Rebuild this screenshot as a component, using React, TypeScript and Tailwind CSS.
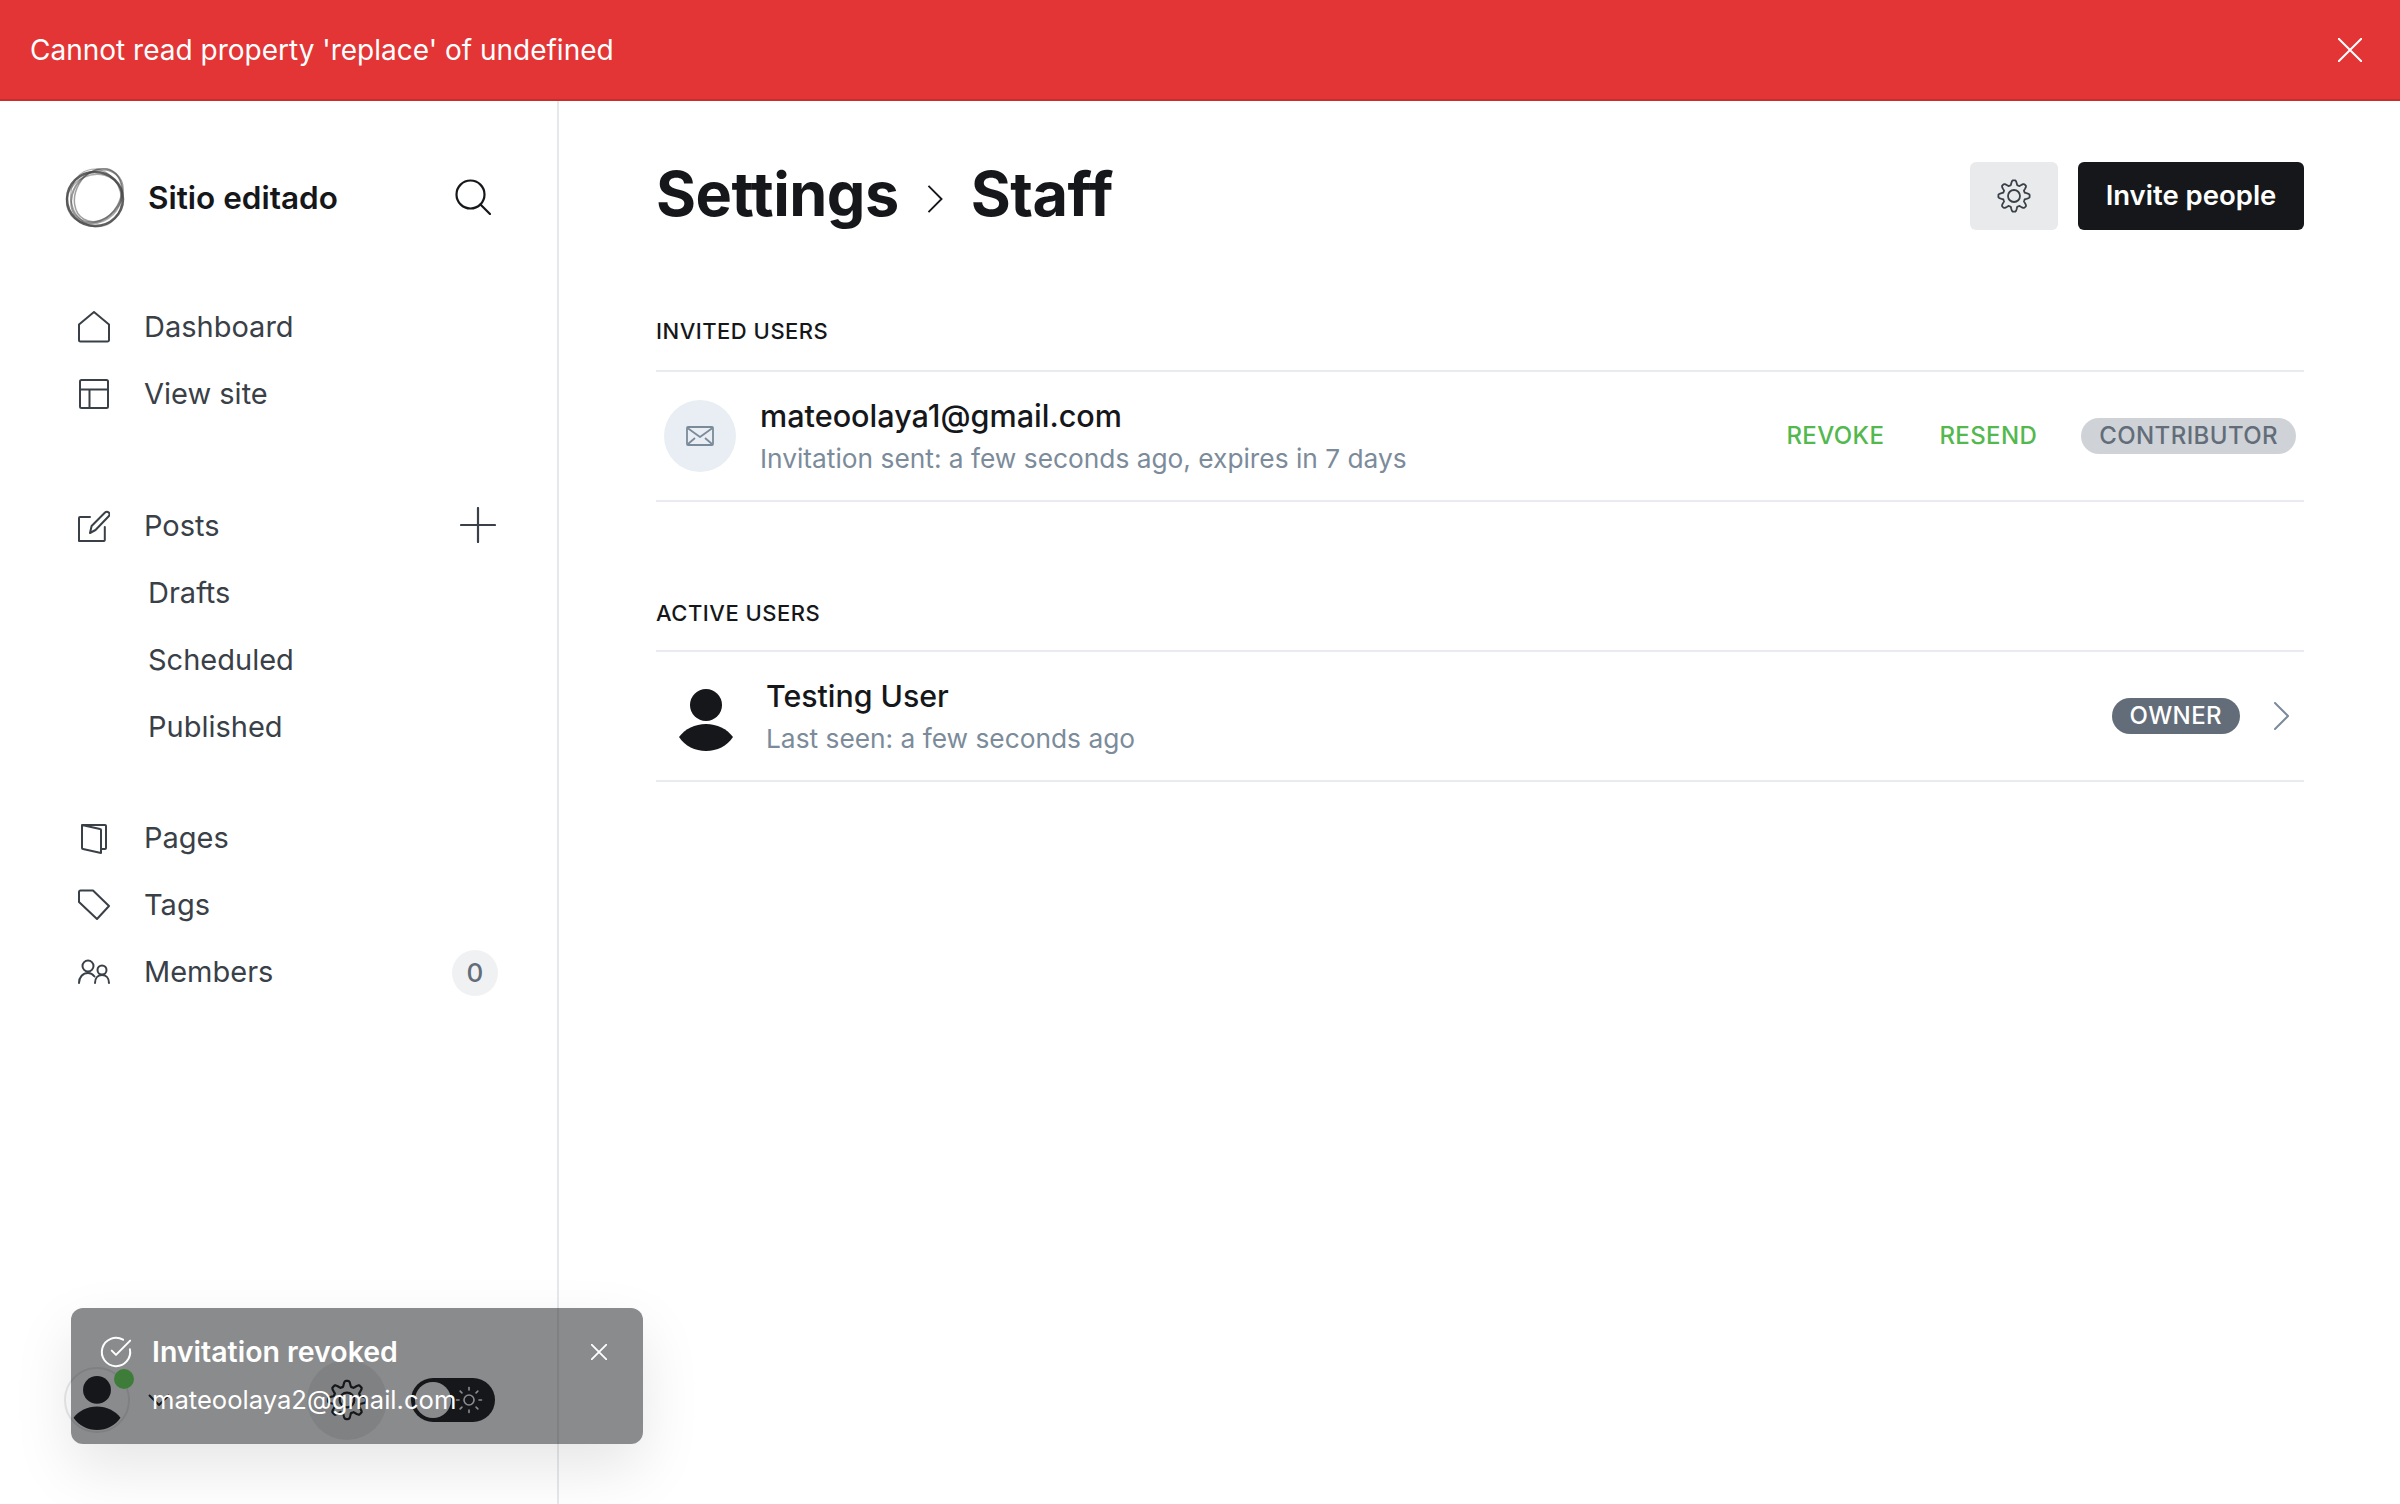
import React from "react";
import { CircleCheckBig, Sun } from "lucide-react";

const navIcon = "w-8 h-8 shrink-0 text-[#394047]";

// scalloped 8 tooth outline, the icon set has no gear with this shape
const gearOutline = Array.from({ length: 144 }, (_, i) => {
  const t = (i / 144) * Math.PI * 2;
  const wave = Math.max(-1, Math.min(1, Math.cos(8 * t) * 1.5));
  const r = 13.4 + 2.2 * wave;
  return `${(18 + r * Math.sin(t)).toFixed(2)},${(18 - r * Math.cos(t)).toFixed(2)}`;
}).join(" ");

function GearIcon({ className, stroke }: { className: string; stroke: string }) {
  return (
    <svg viewBox="0 0 36 36" className={className} fill="none" stroke={stroke} strokeWidth="1.800" strokeLinejoin="round">
      <polygon points={gearOutline} />
      <circle cx="18" cy="18" r="6" />
    </svg>
  );
}

function HomeIcon() {
  return (
    <svg viewBox="0 0 32 32" fill="none" stroke="currentColor" strokeWidth="2" strokeLinejoin="round" className={navIcon}>
      <path d="M1 13.5 16 1l15 12.5V29a1.5 1.5 0 0 1-1.5 1.5h-27A1.5 1.5 0 0 1 1 29z" />
    </svg>
  );
}

function LayoutIcon() {
  return (
    <svg viewBox="0 0 32 32" fill="none" stroke="currentColor" strokeWidth="2" strokeLinejoin="round" className={navIcon}>
      <rect x="2" y="2" width="28" height="28" rx="1.5" />
      <path d="M2 11.5h28M11.5 11.5V30" />
    </svg>
  );
}

function PostsIcon() {
  return (
    <svg viewBox="0 0 32 32" fill="none" stroke="currentColor" strokeWidth="2" strokeLinecap="round" strokeLinejoin="round" className={navIcon}>
      <path d="M12 7H2a1 1 0 0 0-1 1v23h25a1 1 0 0 0 .8-1V17" />
      <path d="m12 23 1.6-7L27 2.5a2.6 2.6 0 0 1 3.7 3.7L17.5 20z" />
    </svg>
  );
}

function PagesIcon() {
  return (
    <svg viewBox="0 0 32 32" fill="none" stroke="currentColor" strokeWidth="2" strokeLinejoin="round" className={navIcon}>
      <path d="M4 3h23a1 1 0 0 1 1 1v22a1 1 0 0 1-1 1h-4" />
      <path d="M4 3l18 4a1 1 0 0 1 1 1v23L5 27a1 1 0 0 1-1-1z" />
    </svg>
  );
}

function TagIcon() {
  return (
    <svg viewBox="0 0 32 32" fill="none" stroke="currentColor" strokeWidth="2" strokeLinejoin="round" className={navIcon}>
      <path d="M1 3a1.5 1.5 0 0 1 1.5-1.5H15L31 17 19 30 1 13z" />
    </svg>
  );
}

function MembersIcon() {
  return (
    <svg viewBox="0 0 32 32" fill="none" stroke="currentColor" strokeWidth="2" strokeLinecap="round" className={navIcon}>
      <circle cx="10" cy="10" r="5.5" />
      <path d="M1 27c0-6 4-10 9-10 3 0 5 1.500 6.500 3.500" />
      <circle cx="24" cy="14" r="4.500" />
      <path d="M17 27c0-5 3-8 7-8s7 3 7 8" />
    </svg>
  );
}

function PersonIcon({ className }: { className: string }) {
  return (
    <svg viewBox="0 0 54 62" className={className} fill="#15171a">
      <ellipse cx="27" cy="16" rx="16" ry="16" />
      <path d="M0 48C6 40 16 35 27 35s21 5 27 13C48 57 38 62 27 62S6 57 0 48z" />
    </svg>
  );
}

function SiteLogo() {
  return (
    <svg viewBox="0 0 62 60" className="w-[62px] h-[60px] shrink-0" fill="none" stroke="#444">
      <ellipse cx="30" cy="31" rx="28" ry="27" strokeWidth="2.500" strokeOpacity="0.85" />
      <ellipse cx="32" cy="28" rx="29" ry="23" strokeWidth="2" strokeOpacity="0.55" transform="rotate(-48 32 28)" />
      <ellipse cx="33" cy="27" rx="28" ry="22" strokeWidth="1.500" strokeOpacity="0.5" transform="rotate(-60 33 27)" />
      <ellipse cx="29" cy="31" rx="28" ry="24" strokeWidth="1.500" strokeOpacity="0.45" transform="rotate(-25 29 31)" />
      <ellipse cx="31" cy="30" rx="29" ry="25" strokeWidth="1.200" strokeOpacity="0.4" transform="rotate(75 31 30)" />
    </svg>
  );
}

function NavRow({ icon, label, right }: { icon: React.ReactNode; label: string; right?: React.ReactNode }) {
  return (
    <div className="flex items-center h-[67px] pl-[78px] pr-[59px] text-[29px] text-[#394047]">
      {icon}
      <span className="ml-[34px] flex-1">{label}</span>
      {right}
    </div>
  );
}

function SubRow({ label }: { label: string }) {
  return <div className="flex items-center h-[67px] pl-[148px] text-[29px] text-[#394047]">{label}</div>;
}

export default function App() {
  return (
    <div className="relative flex flex-col h-[1504px] w-[2400px] overflow-hidden bg-white font-[Inter,sans-serif]">
      {/* Error banner */}
      <div className="flex items-center justify-between h-[101px] shrink-0 pl-[30px] pr-[38px] bg-[#e33535] border-b-2 border-[#c62d2d] text-white text-[28px]">
        <span>Cannot read property 'replace' of undefined</span>
        <svg viewBox="0 0 24 24" className="w-6 h-6" fill="none" stroke="white" strokeWidth="2">
          <path d="M0 0l24 24M24 0L0 24" />
        </svg>
      </div>

      <div className="flex flex-1 min-h-0">
        {/* Sidebar */}
        <aside className="flex flex-col w-[559px] shrink-0 border-r-2 border-[#e6e9eb] pt-[67px] pb-[64px]">
          <div className="flex items-center h-[60px] pl-[65px] pr-[66px]">
            <SiteLogo />
            <span className="ml-[21px] flex-1 text-[31.500px] font-semibold text-[#15171a]">Sitio editado</span>
            <svg viewBox="0 0 36 36" className="w-9 h-9 mb-[2px]" fill="none" stroke="#15171a" strokeWidth="2.200" strokeLinecap="round">
              <circle cx="15.500" cy="15.500" r="14" />
              <path d="M25.500 25.500 35 35" />
            </svg>
          </div>

          <nav className="mt-[65px] flex flex-col gap-[65px]">
            <div>
              <NavRow icon={<HomeIcon />} label="Dashboard" />
              <NavRow icon={<LayoutIcon />} label="View site" />
            </div>
            <div className="flex flex-col gap-[44px]">
              <div>
                <NavRow
                  icon={<PostsIcon />}
                  label="Posts"
                  right={
                    <svg viewBox="0 0 36 36" className="w-9 h-9 mr-[2px] mb-[2px]" fill="none" stroke="#394047" strokeWidth="2.200" strokeLinecap="round">
                      <path d="M18 1v34M1 18h34" />
                    </svg>
                  }
                />
                <SubRow label="Drafts" />
                <SubRow label="Scheduled" />
                <SubRow label="Published" />
              </div>
              <div>
                <NavRow icon={<PagesIcon />} label="Pages" />
                <NavRow icon={<TagIcon />} label="Tags" />
                <NavRow
                  icon={<MembersIcon />}
                  label="Members"
                  right={
                    <span className="flex items-center justify-center w-[46px] h-[46px] mt-[2px] rounded-full bg-[#eff1f3] text-[26px] font-medium text-[#626d79]">
                      0
                    </span>
                  }
                />
              </div>
            </div>
          </nav>

          {/* User row, sits behind the toast */}
          <div className="mt-auto flex items-center pl-[64px]">
            <div className="relative flex items-end justify-center w-[66px] h-[66px] rounded-full border-2 border-[#e6e9eb]">
              <PersonIcon className="w-[48px] h-[54px] mb-[1px]" />
              <span className="absolute top-[0px] -right-[6px] w-5 h-5 rounded-full bg-[#67e158]" />
            </div>
            <svg viewBox="0 0 22 12" className="w-[22px] h-3 ml-[18px]" fill="none" stroke="#15171a" strokeWidth="2">
              <path d="M1 1l10 10L21 1" />
            </svg>
            <div className="flex items-center justify-center w-20 h-20 ml-[137px] rounded-full bg-[#e9ebed]">
              <GearIcon className="w-[44px] h-[44px]" stroke="#15171a" />
            </div>
            <div className="flex items-center justify-between w-[84px] h-11 ml-[24px] px-1 rounded-full bg-[#15171a]">
              <span className="w-9 h-9 rounded-full bg-white" />
              <Sun className="w-[30px] h-[30px] mr-[7px] text-white" strokeWidth={1.3} />
            </div>
          </div>
        </aside>

        {/* Main */}
        <main className="flex-1 pt-[61px] pl-[97px] pr-[96px]">
          <header className="flex items-center justify-between h-[68px]">
            <h1 className="flex items-center mb-[2px] text-[61.200px] font-bold tracking-[-0.5px] text-[#15171a]">
              Settings
              <svg viewBox="0 0 16 30" className="w-4 h-[28px] mx-[28px] mt-[8px]" fill="none" stroke="#15171a" strokeWidth="2">
                <path d="M1 1l14 14L1 29" />
              </svg>
              Staff
            </h1>
            <div className="flex items-center gap-5">
              <button className="flex items-center justify-center w-[88px] h-[68px] rounded-md bg-[#e9eaec]">
                <GearIcon className="w-9 h-9" stroke="#394047" />
              </button>
              <button className="w-[226px] h-[68px] rounded-md bg-[#15171a] text-white text-[27.500px] font-semibold">
                Invite people
              </button>
            </div>
          </header>

          <section className="mt-[84px]">
            <h2 className="h-[56px] text-[22px] font-medium leading-[34px] tracking-[0.5px] text-[#15171a]">INVITED USERS</h2>
            <div className="flex items-center h-[132px] px-2 border-y-2 border-[#e8ecf0]">
              <div className="flex items-center justify-center w-[72px] h-[72px] rounded-full bg-[#e8eef3]">
                <svg viewBox="0 0 28 20" className="w-7 h-5" fill="none" stroke="#7c8b9a" strokeWidth="1.800" strokeLinejoin="round">
                  <rect x="1" y="1" width="26" height="18" rx="1" />
                  <path d="M1.500 2 14 11 26.500 2M2 18l7-6M26 18l-7-6" />
                </svg>
              </div>
              <div className="ml-[24px] mt-[2px] flex-1">
                <div className="text-[30.600px] leading-[42px] font-medium text-[#15171a]">mateoolaya1@gmail.com</div>
                <div className="mt-[1px] text-[26.300px] leading-[42px] text-[#7c8b9a]">Invitation sent: a few seconds ago, expires in 7 days</div>
              </div>
              <div className="flex items-center text-[24px] font-medium text-[#53b84e] tracking-[0.4px]">
                <span>REVOKE</span>
                <span className="ml-[55px]">RESEND</span>
                <span className="ml-[44px] px-[18px] h-9 leading-9 rounded-full bg-[#cfd3d8] text-[#626d79]">CONTRIBUTOR</span>
              </div>
            </div>
          </section>

          <section className="mt-[94px]">
            <h2 className="h-[54px] text-[22px] font-medium leading-[34px] tracking-[0.5px] text-[#15171a]">ACTIVE USERS</h2>
            <div className="flex items-center h-[132px] pl-[23px] pr-[15px] border-y-2 border-[#e8ecf0]">
              <PersonIcon className="w-[54px] h-[62px] mt-[8px]" />
              <div className="ml-[33px] mt-[2px] flex-1">
                <div className="text-[30.300px] leading-[42px] font-medium text-[#15171a]">Testing User</div>
                <div className="mt-[1px] text-[26.300px] leading-[42px] text-[#7c8b9a]">Last seen: a few seconds ago</div>
              </div>
              <span className="px-[18px] h-9 leading-9 rounded-full bg-[#626d79] text-white text-[24px] font-medium tracking-[0.4px]">OWNER</span>
              <svg viewBox="0 0 15 28" className="w-[15px] h-7 ml-[34px]" fill="none" stroke="#7c8b9a" strokeWidth="2" strokeLinecap="round">
                <path d="M1 1l13 13L1 27" />
              </svg>
            </div>
          </section>
        </main>
      </div>

      {/* Toast */}
      <div className="absolute left-[71px] top-[1308px] w-[572px] h-[136px] pt-[28px] rounded-xl bg-[#15171a]/50 shadow-[0_24px_60px_rgba(0,0,0,0.1)] text-white">
        <div className="flex items-center h-[32px] pl-[28px] pr-9">
          <CircleCheckBig className="w-[34px] h-[34px] shrink-0" strokeWidth={1.4} />
          <span className="ml-[19px] flex-1 text-[28.500px] font-semibold">Invitation revoked</span>
          <svg viewBox="0 0 16 16" className="w-4 h-4" fill="none" stroke="white" strokeWidth="1.800">
            <path d="M0 0l16 16M16 0L0 16" />
          </svg>
        </div>
        <div className="pl-[81px] mt-[12px] text-[25.600px] leading-[40px]">mateoolaya2@gmail.com</div>
      </div>
    </div>
  );
}
